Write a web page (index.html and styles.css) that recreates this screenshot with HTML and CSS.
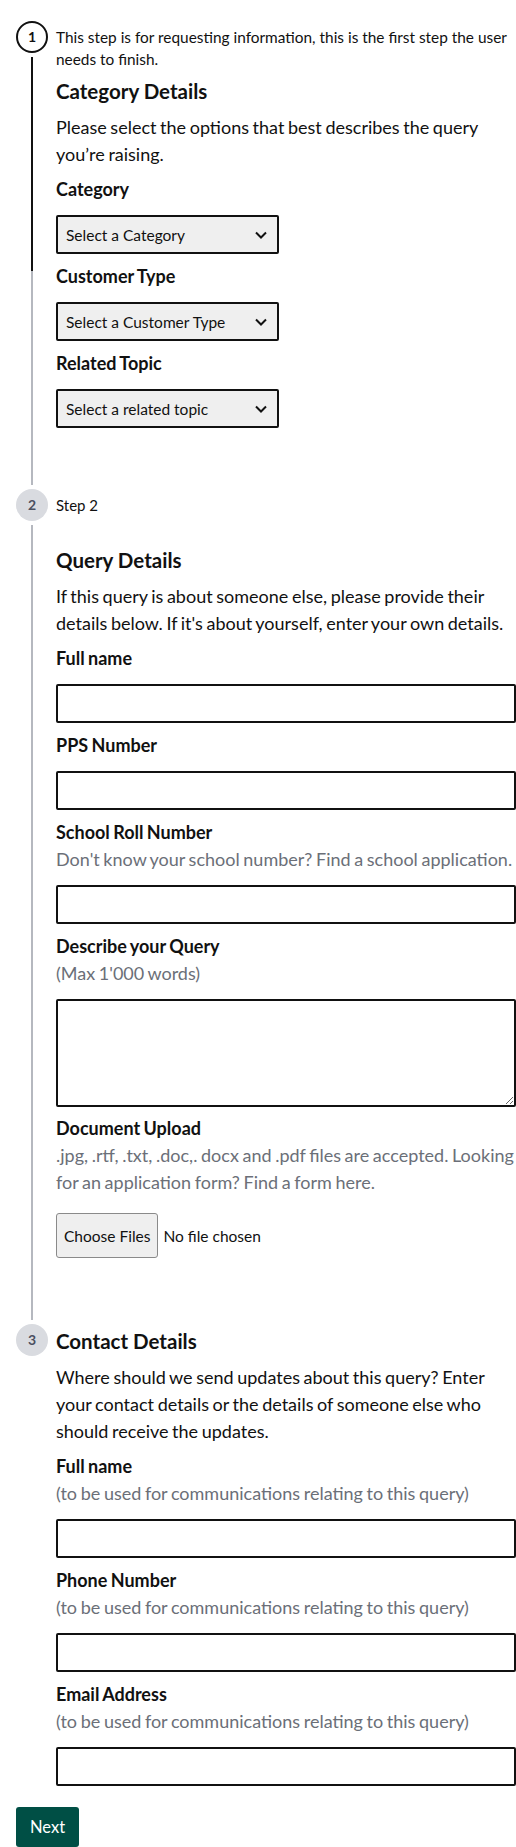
FILE: index.html
```html
<!DOCTYPE html>
<html lang="en">
<head>
<meta charset="utf-8">
<title>Query form</title>
<link rel="stylesheet" href="styles.css">
</head>
<body>
<main class="page">
  <form class="stepper" onsubmit="return false">
    <section class="step">
      <div class="rail">
        <span class="badge badge--active">1</span>
        <span class="connector connector--progress"></span>
      </div>
      <div class="content content--first">
        <p class="step-desc">This step is for requesting information, this is the first step the user needs to finish.</p>
        <h2 class="heading">Category Details</h2>
        <p class="lead">Please select the options that best describes the query you’re raising.</p>
        <div class="field">
          <label class="label" for="cat">Category</label>
          <div class="select-wrap">
            <select id="cat" class="select"><option>Select a Category</option></select>
            <svg class="chev" width="12" height="8" viewBox="0 0 12 8" aria-hidden="true"><path d="M1 1.5L6 6.5L11 1.5" fill="none" stroke="#111" stroke-width="2"/></svg>
          </div>
        </div>
        <div class="field">
          <label class="label" for="ctype">Customer Type</label>
          <div class="select-wrap">
            <select id="ctype" class="select"><option>Select a Customer Type</option></select>
            <svg class="chev" width="12" height="8" viewBox="0 0 12 8" aria-hidden="true"><path d="M1 1.5L6 6.5L11 1.5" fill="none" stroke="#111" stroke-width="2"/></svg>
          </div>
        </div>
        <div class="field">
          <label class="label" for="topic">Related Topic</label>
          <div class="select-wrap">
            <select id="topic" class="select"><option>Select a related topic</option></select>
            <svg class="chev" width="12" height="8" viewBox="0 0 12 8" aria-hidden="true"><path d="M1 1.5L6 6.5L11 1.5" fill="none" stroke="#111" stroke-width="2"/></svg>
          </div>
        </div>
      </div>
    </section>

    <section class="step">
      <div class="rail">
        <span class="badge badge--todo">2</span>
        <span class="connector"></span>
      </div>
      <div class="content content--second">
        <p class="step-title">Step 2</p>
        <h2 class="heading heading--spaced">Query Details</h2>
        <p class="lead">If this query is about someone else, please provide their details below. If it's about yourself, enter your own details.</p>
        <div class="field">
          <label class="label" for="qname">Full name</label>
          <input id="qname" class="input" type="text">
        </div>
        <div class="field">
          <label class="label" for="pps">PPS Number</label>
          <input id="pps" class="input" type="text">
        </div>
        <div class="field">
          <label class="label" for="roll">School Roll Number</label>
          <p class="hint">Don't know your school number? Find a school application.</p>
          <input id="roll" class="input" type="text">
        </div>
        <div class="field">
          <label class="label" for="desc">Describe your Query</label>
          <p class="hint">(Max 1'000 words)</p>
          <textarea id="desc" class="textarea"></textarea>
        </div>
        <div class="field field--upload">
          <label class="label" for="docs">Document Upload</label>
          <p class="hint">.jpg, .rtf, .txt, .doc,. docx and .pdf files are accepted. Looking for an application form? Find a form here.</p>
          <input id="docs" class="file" type="file" multiple>
        </div>
      </div>
    </section>

    <section class="step">
      <div class="rail">
        <span class="badge badge--todo">3</span>
      </div>
      <div class="content content--third">
        <h2 class="heading heading--inline">Contact Details</h2>
        <p class="lead">Where should we send updates about this query? Enter your contact details or the details of someone else who should receive the updates.</p>
        <div class="field">
          <label class="label" for="cname">Full name</label>
          <p class="hint">(to be used for communications relating to this query)</p>
          <input id="cname" class="input" type="text">
        </div>
        <div class="field">
          <label class="label" for="phone">Phone Number</label>
          <p class="hint">(to be used for communications relating to this query)</p>
          <input id="phone" class="input" type="tel">
        </div>
        <div class="field">
          <label class="label" for="email">Email Address</label>
          <p class="hint">(to be used for communications relating to this query)</p>
          <input id="email" class="input" type="email">
        </div>
      </div>
    </section>

    <div class="actions">
      <button class="btn-next" type="submit">Next</button>
    </div>
  </form>
</main>
</body>
</html>
```

FILE: styles.css
```css
* { box-sizing: border-box; }

html, body {
  margin: 0;
  padding: 0;
  background: #ffffff;
}

body {
  font-family: Lato, "Noto Sans", sans-serif;
  color: #111111;
}

.page {
  padding: 21px 0 0 16px;
}

.stepper {
  display: flex;
  flex-direction: column;
  margin: 0;
}

.step {
  display: grid;
  grid-template-columns: 32px 1fr;
  column-gap: 8px;
}

.rail {
  display: flex;
  flex-direction: column;
  align-items: center;
}

.badge {
  flex: none;
  width: 32px;
  height: 32px;
  border-radius: 50%;
  display: flex;
  align-items: center;
  justify-content: center;
  font-size: 14px;
  font-weight: 700;
  line-height: 1;
}

.badge--active {
  border: 2px solid #111111;
  background: #ffffff;
  color: #111111;
}

.badge--todo {
  background: #d9dbe0;
  color: #4b5060;
}

.connector {
  flex: 1;
  width: 2px;
  margin: 4px 0;
  background: #b5b8bf;
}

.connector--progress {
  background: linear-gradient(#111111 0 214px, #b5b8bf 214px);
}

.content {
  min-width: 0;
  display: flex;
  flex-direction: column;
}

.content--first { padding: 5px 0 61px; }
.content--second { padding: 0 0 66px; }
.content--third { padding: 5px 0 0; }

.step-desc {
  margin: 0;
  font-size: 15.4px;
  line-height: 22px;
}

.step-title {
  margin: 0;
  font-size: 15px;
  line-height: 32px;
}

.heading {
  margin: 9px 0 11px;
  font-size: 20.5px;
  line-height: 24px;
  font-weight: 700;
}

.heading--spaced { margin-top: 27px; }
.heading--inline { margin-top: 0; }

.lead {
  margin: 0 0 8px;
  font-size: 18px;
  line-height: 27px;
  word-spacing: -1px;
}

.field {
  display: flex;
  flex-direction: column;
  align-items: flex-start;
}

.field + .field { margin-top: 9px; }

.label {
  font-size: 18px;
  line-height: 27px;
  font-weight: 700;
  word-spacing: -1px;
}

.hint {
  margin: 0;
  font-size: 18px;
  line-height: 27px;
  word-spacing: -1px;
  color: #6b6f78;
}

.select-wrap {
  position: relative;
  width: 223px;
  margin-top: 12px;
}

.select {
  display: block;
  width: 100%;
  height: 39px;
  margin: 0;
  padding: 0 30px 0 8px;
  appearance: none;
  -webkit-appearance: none;
  background: #efefef;
  border: 2px solid #111111;
  border-radius: 2px;
  font-family: Lato, "Noto Sans", sans-serif;
  font-size: 15.5px;
  color: #111111;
}

.chev {
  position: absolute;
  right: 12px;
  top: 16px;
  pointer-events: none;
}

.input {
  display: block;
  width: 100%;
  height: 39px;
  margin: 12px 0 0;
  padding: 0 8px;
  border: 2px solid #111111;
  border-radius: 2px;
  background: #ffffff;
  font-family: Lato, "Noto Sans", sans-serif;
  font-size: 16px;
}

.textarea {
  display: block;
  width: 100%;
  height: 108px;
  margin: 12px 0 0;
  padding: 8px;
  border: 2px solid #111111;
  border-radius: 2px;
  background: #ffffff;
  font-family: Lato, "Noto Sans", sans-serif;
  font-size: 16px;
}

.field + .field--upload { margin-top: 8px; }

.file {
  display: block;
  margin: 17px 0 0;
  padding: 0;
  font-family: Lato, "Noto Sans", sans-serif;
  font-size: 15.5px;
  color: #111111;
}

.file::file-selector-button {
  height: 45px;
  margin: 0 5px 0 0;
  padding: 0 7px;
  font-family: inherit;
  font-size: 15.5px;
  color: #111111;
  background: #efefef;
  border: 1px solid #8a8a8a;
  border-radius: 3px;
}

.actions {
  display: flex;
  margin-top: 21px;
}

.btn-next {
  height: 40px;
  padding: 0 14px;
  border: none;
  border-radius: 3px;
  background: #004f45;
  color: #ffffff;
  font-family: Lato, "Noto Sans", sans-serif;
  font-size: 16.5px;
}
```
